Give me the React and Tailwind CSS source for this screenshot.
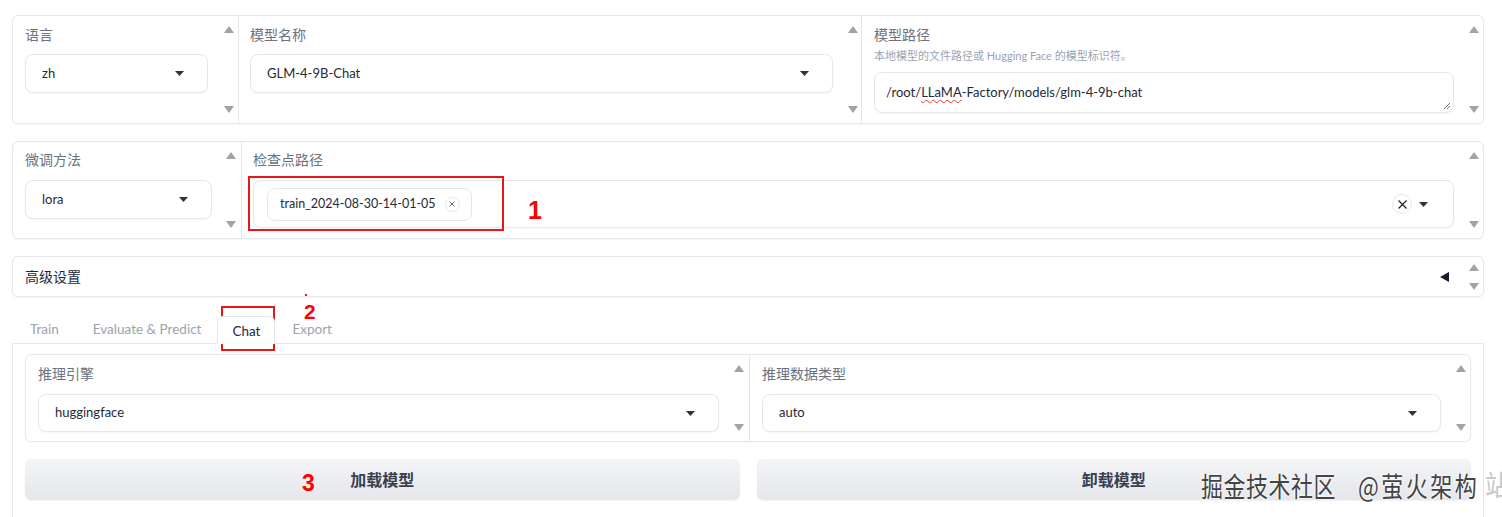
import React from 'react';

const Caret = () => (
  <svg width="9" height="5" viewBox="0 0 9 5" className="shrink-0">
    <path d="M0 0h9L4.5 5z" fill="#333" />
  </svg>
);

function Scroll({ className = '' }) {
  return (
    <div className={`w-[16px] shrink-0 flex flex-col items-center justify-between ${className}`}>
      <svg width="10" height="7" viewBox="0 0 10 7"><path d="M5 0l5 7H0z" fill="#a3a3a3" /></svg>
      <svg width="10" height="7" viewBox="0 0 10 7"><path d="M0 0h10L5 7z" fill="#a3a3a3" /></svg>
    </div>
  );
}

function Select({ value, className = '', h = 'h-[39px]' }) {
  return (
    <div className={`${h} flex items-center justify-between pl-[16px] pr-[23px] bg-white border border-[#e5e7eb] rounded-[8px] shadow-[0_1px_2px_rgba(0,0,0,0.04)] ${className}`}>
      <span className="text-[13px] text-[#1f2937]">{value}</span>
      <Caret />
    </div>
  );
}

function Label({ children }) {
  return <div className="text-[14px] leading-[20px] text-[#6b7280]">{children}</div>;
}

function Tab({ children, active, className = '' }) {
  if (active) {
    return (
      <span className={`h-[28px] pt-[5px] mb-[-1px] text-[13.5px] leading-[18px] text-[#1f2937] border-x border-t border-[#e5e7eb] rounded-t-[6px] bg-white relative z-10 ${className}`}>
        {children}
      </span>
    );
  }
  return <span className={`h-[27px] pt-[4px] text-[13.5px] leading-[18px] text-[#9ca3af] ${className}`}>{children}</span>;
}

export default function App() {
  return (
    <div className="relative w-[1502px] h-[517px] overflow-hidden bg-white font-['Lato','Noto_Sans_CJK_SC',sans-serif] px-[12px] pt-[15px]">
      <div className="w-[1472px] flex flex-col">
        {/* row 1 */}
        <div className="h-[109px] flex border border-[#e5e7eb] rounded-[6px] shadow-[0_1px_2px_rgba(0,0,0,0.04)]">
          <div className="w-[225px] flex">
            <div className="flex-1 pl-[12px] pt-[9px]">
              <Label>语言</Label>
              <Select value="zh" className="mt-[9px] w-[183px]" />
            </div>
            <Scroll className="py-[10px] mr-[1px]" />
          </div>
          <div className="w-[623px] flex border-l border-[#e5e7eb]">
            <div className="flex-1 pl-[11px] pr-[12px] pt-[9px]">
              <Label>模型名称</Label>
              <Select value="GLM-4-9B-Chat" className="mt-[9px]" />
            </div>
            <Scroll className="py-[10px]" />
          </div>
          <div className="flex-1 flex border-l border-[#e5e7eb]">
            <div className="flex-1 pl-[12px] pr-[12px] pt-[9px]">
              <Label>模型路径</Label>
              <div className="text-[11px] leading-[16px] text-[#9ca3af] mt-[3px]">本地模型的文件路径或 Hugging Face 的模型标识符。</div>
              <div className="relative mt-[8px] h-[41px] flex items-center px-[11px] bg-white border border-[#e5e7eb] rounded-[8px] shadow-[0_1px_2px_rgba(0,0,0,0.04)]">
                <span className="text-[13px] text-[#1f2937]">
                  /root/<span className="underline decoration-wavy decoration-[#e53935] decoration-1 underline-offset-2">LLaMA</span>-Factory/models/glm-4-9b-chat
                </span>
                <svg width="8" height="8" viewBox="0 0 8 8" className="absolute right-[2px] bottom-[2px]">
                  <path d="M1 7L7 1M4 7L7 4" stroke="#777" strokeWidth="1" />
                </svg>
              </div>
            </div>
            <Scroll className="py-[10px] mr-[1px]" />
          </div>
        </div>

        {/* row 2 */}
        <div className="mt-[17px] h-[98px] flex border border-[#e5e7eb] rounded-[6px] shadow-[0_1px_2px_rgba(0,0,0,0.04)]">
          <div className="w-[228px] flex">
            <div className="flex-1 pl-[12px] pt-[8px]">
              <Label>微调方法</Label>
              <Select value="lora" className="mt-[10px] w-[187px]" />
            </div>
            <Scroll className="py-[10px] mr-[2px]" />
          </div>
          <div className="flex-1 flex border-l border-[#e5e7eb]">
            <div className="flex-1 pl-[11px] pr-[12px] pt-[8px]">
              <Label>检查点路径</Label>
              <div className="mt-[10px] h-[48px] flex items-center justify-between pl-[13px] pr-[25px] bg-white border border-[#e5e7eb] rounded-[8px] shadow-[0_1px_2px_rgba(0,0,0,0.04)]">
                <div className="h-[33px] flex items-center gap-[9px] pl-[12px] pr-[11px] bg-white border border-[#e5e7eb] rounded-[8px]">
                  <span className="text-[12.5px] text-[#1f2937]">train_2024-08-30-14-01-05</span>
                  <span className="w-[15px] h-[15px] rounded-full border border-[#e5e7eb] flex items-center justify-center">
                    <svg width="6" height="6" viewBox="0 0 6 6"><path d="M0.5 0.5l5 5M5.5 0.5l-5 5" stroke="#555" strokeWidth="0.9" /></svg>
                  </span>
                </div>
                <div className="flex items-center gap-[7px]">
                  <span className="w-[20px] h-[20px] rounded-full border border-[#e5e7eb] flex items-center justify-center">
                    <svg width="9" height="9" viewBox="0 0 9 9"><path d="M0.5 0.5l8 8M8.5 0.5l-8 8" stroke="#222" strokeWidth="1.2" /></svg>
                  </span>
                  <Caret />
                </div>
              </div>
            </div>
            <Scroll className="py-[10px] mr-[1px]" />
          </div>
        </div>

        {/* accordion */}
        <div className="mt-[17px] h-[41px] flex items-center border border-[#e5e7eb] rounded-[6px] shadow-[0_1px_2px_rgba(0,0,0,0.04)] pl-[12px]">
          <span className="flex-1 text-[14px] text-[#1f2937]">高级设置</span>
          <svg width="9" height="10" viewBox="0 0 9 10" className="mr-[17px]"><path d="M9 0v10L0 5z" fill="#1a1a2e" /></svg>
          <Scroll className="h-[30px] py-[2px] mr-[1px]" />
        </div>

        {/* tabs */}
        <div className="mt-[19px] h-[27px] flex items-end pl-[1px]">
          <Tab className="px-[17px]">Train</Tab>
          <Tab className="pl-[17px] pr-[16px]">Evaluate &amp; Predict</Tab>
          <Tab active className="px-[14px]">Chat</Tab>
          <Tab className="px-[17px]">Export</Tab>
        </div>

        {/* tab panel */}
        <div className="h-[200px] border border-[#e5e7eb] rounded-b-[6px] px-[12px] pt-[10px]">
          <div className="h-[88px] flex border border-[#e5e7eb] rounded-[6px] shadow-[0_1px_2px_rgba(0,0,0,0.04)]">
            <div className="w-[723px] flex">
              <div className="flex-1 pl-[12px] pr-[12px] pt-[9px]">
                <Label>推理引擎</Label>
                <Select value="huggingface" className="mt-[10px]" h="h-[38px]" />
              </div>
              <Scroll className="py-[10px] mr-[2px]" />
            </div>
            <div className="flex-1 flex border-l border-[#e5e7eb]">
              <div className="flex-1 pl-[12px] pr-[12px] pt-[9px]">
                <Label>推理数据类型</Label>
                <Select value="auto" className="mt-[10px]" h="h-[38px]" />
              </div>
              <Scroll className="py-[10px] mr-[1px]" />
            </div>
          </div>
          <div className="mt-[17px] flex gap-[17px]">
            <div className="flex-1 h-[41px] rounded-[6px] bg-gradient-to-b from-[#f3f4f6] to-[#e5e7eb] shadow-[0_1px_2px_rgba(0,0,0,0.06)] flex items-center justify-center text-[16px] font-bold text-[#374151]">加载模型</div>
            <div className="flex-1 h-[41px] rounded-[6px] bg-gradient-to-b from-[#f3f4f6] to-[#e5e7eb] shadow-[0_1px_2px_rgba(0,0,0,0.06)] flex items-center justify-center text-[16px] font-bold text-[#374151]">卸载模型</div>
          </div>
        </div>
      </div>

      {/* annotations */}
      <div className="absolute left-[248px] top-[176px] w-[256px] h-[55px] border-2 border-[#e81818]" />
      <div className="absolute left-[528px] top-[198px] text-[25px] font-bold text-[#f00] leading-none font-['Liberation_Sans',sans-serif]">1</div>
      <div className="absolute left-[221px] top-[306px] w-[54px] h-[45px] border-2 border-[#e81818]" />
      <div className="absolute left-[304px] top-[302px] text-[21px] font-bold text-[#f00] leading-[19px] font-['Liberation_Sans',sans-serif]">2</div>
      <div className="absolute left-[305px] top-[294px] w-[2px] h-[2px] bg-[#e81818]" />
      <div className="absolute left-[302px] top-[472px] text-[23px] font-bold text-[#f00] leading-none font-['Liberation_Sans',sans-serif]">3</div>

      {/* watermark */}
      <div className="absolute left-[1485px] top-[470px] origin-top scale-y-[1.2] text-[24px] leading-none text-[#c8c8c8] font-['Noto_Sans_CJK_SC',sans-serif]">站</div>
      <div className="absolute left-[1201px] top-[471px] flex origin-top scale-y-[1.25] text-[22px] leading-none text-[#444] font-['Noto_Sans_CJK_SC',sans-serif] [text-shadow:0_0_2px_#fff,0_0_2px_#fff]">
        <span className="tracking-[0.5px]">掘金技术社区</span>
        <span className="ml-[22px] tracking-[2.5px]">@萤火架构</span>
      </div>
    </div>
  );
}
